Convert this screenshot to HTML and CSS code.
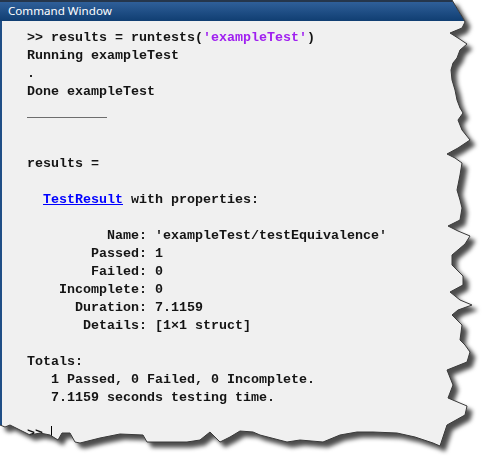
FILE: index.html
```html
<!DOCTYPE html>
<html>
<head>
<meta charset="utf-8">
<link rel="stylesheet" href="styles.css">
</head>
<body>
<div class="shot">
  <div class="window">
    <div class="titlebar">Command Window</div>
<pre class="console">&gt;&gt; results = runtests(<span class="str">'exampleTest'</span>)
Running exampleTest
.
Done exampleTest
<span class="rule">__________</span>


results = 

  <a class="link" href="#">TestResult</a> with properties:

          Name: 'exampleTest/testEquivalence'
        Passed: 1
        Failed: 0
    Incomplete: 0
      Duration: 7.1159
       Details: [1×1 struct]

Totals:
   1 Passed, 0 Failed, 0 Incomplete.
   7.1159 seconds testing time.

&gt;&gt; <span class="cursor"></span></pre>
  </div>
  <svg class="edge" width="480" height="460" viewBox="0 0 480 460">
    <polyline points="452,0 455,5 458,10 463,18 465,22 462,28 450,33 458,38 467,44 460,50 457,58 453,63 451,70 452,80 455,90 457,100 460,108 463,113 458,120 462,130 470,140 458,148 447,154 455,158 462,163 460,175 457,190 460,200 462,208 460,220 448,226 458,231 470,236 465,244 452,255 452,265 457,270 463,276 463,285 450,292 460,300 472,305 458,310 452,315 462,325 460,340 465,345 470,352 467,362 447,370 453,385 448,398 467,406 465,415 447,425 440,446 433,443 415,437 397,433 373,432 357,432 340,435 323,442 300,440 287,442 260,435 253,432 240,431 230,437 220,442 210,432 200,440 187,442 147,442 143,435 120,434 100,438 80,443 75,442 70,433 62,433 58,440 50,435 40,433 30,435 20,430 10,425 5,427 0,425" />
  </svg>
</div>
</body>
</html>
```

FILE: styles.css
```css
html, body {
  margin: 0;
  padding: 0;
  background: #ffffff;
}

.shot {
  position: relative;
  width: 480px;
  height: 460px;
  filter: drop-shadow(5px 5px 2px rgba(0, 0, 0, 0.7));
}

.window {
  width: 476px;
  height: 450px;
  background: #f0f0f0;
  display: flex;
  flex-direction: column;
  clip-path: polygon(0px 0px, 452px 0px, 455px 5px, 458px 10px, 463px 18px, 465px 22px, 462px 28px, 450px 33px, 458px 38px, 467px 44px, 460px 50px, 457px 58px, 453px 63px, 451px 70px, 452px 80px, 455px 90px, 457px 100px, 460px 108px, 463px 113px, 458px 120px, 462px 130px, 470px 140px, 458px 148px, 447px 154px, 455px 158px, 462px 163px, 460px 175px, 457px 190px, 460px 200px, 462px 208px, 460px 220px, 448px 226px, 458px 231px, 470px 236px, 465px 244px, 452px 255px, 452px 265px, 457px 270px, 463px 276px, 463px 285px, 450px 292px, 460px 300px, 472px 305px, 458px 310px, 452px 315px, 462px 325px, 460px 340px, 465px 345px, 470px 352px, 467px 362px, 447px 370px, 453px 385px, 448px 398px, 467px 406px, 465px 415px, 447px 425px, 440px 446px, 433px 443px, 415px 437px, 397px 433px, 373px 432px, 357px 432px, 340px 435px, 323px 442px, 300px 440px, 287px 442px, 260px 435px, 253px 432px, 240px 431px, 230px 437px, 220px 442px, 210px 432px, 200px 440px, 187px 442px, 147px 442px, 143px 435px, 120px 434px, 100px 438px, 80px 443px, 75px 442px, 70px 433px, 62px 433px, 58px 440px, 50px 435px, 40px 433px, 30px 435px, 20px 430px, 10px 425px, 5px 427px, 0px 425px);
}

.titlebar {
  height: 19px;
  border-top: 2px solid #25364c;
  background: linear-gradient(#2f5f99, #103e72);
  color: #ffffff;
  font-family: "Noto Sans", "Open Sans", sans-serif;
  font-size: 11.6px;
  line-height: 18px;
  padding-left: 8px;
  flex: none;
}

.console {
  flex: 1;
  margin: 0;
  padding: 8px 0 0 25px;
  border-left: 2px solid #1f4e86;
  font-family: "Liberation Mono", "Courier New", monospace;
  font-size: 13.333px;
  font-weight: bold;
  line-height: 18px;
  color: #141414;
  white-space: pre;
  overflow: hidden;
}

.rule {
  position: relative;
  top: 3px;
}

.str {
  color: #a020f0;
}

.link {
  color: #0000ff;
  text-decoration: underline;
}

.cursor {
  display: inline-block;
  width: 0;
  height: 14px;
  border-left: 1px solid #000000;
  vertical-align: -3px;
}

.edge {
  position: absolute;
  left: 0;
  top: 0;
  pointer-events: none;
}

.edge polyline {
  fill: none;
  stroke: #3a3a3a;
  stroke-width: 1;
}
```
